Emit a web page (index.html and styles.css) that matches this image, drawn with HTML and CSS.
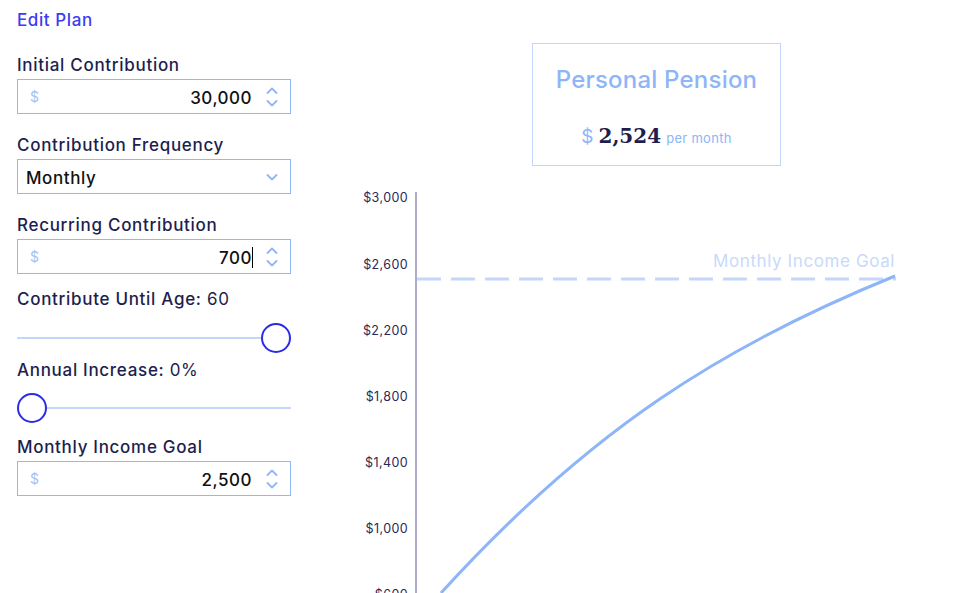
FILE: index.html
```html
<!DOCTYPE html>
<html>
<head>
<meta charset="utf-8">
<link rel="stylesheet" href="styles.css">
</head>
<body>
<div class="page">
  <aside class="form">
    <div class="title">Edit Plan</div>

    <div class="label">Initial Contribution</div>
    <div class="field">
      <span class="cur">$</span>
      <span class="val">30,000</span>
      <span class="stepper">
        <svg width="12" height="24" viewBox="0 0 12 24"><path d="M1.5 8 L6 3.5 L10.5 8" /><path d="M1.5 16 L6 20.5 L10.5 16" /></svg>
      </span>
    </div>

    <div class="label gap">Contribution Frequency</div>
    <div class="field select">
      <span class="sel">Monthly</span>
      <span class="stepper">
        <svg width="12" height="24" viewBox="0 0 12 24"><path d="M1.5 10 L6 14.5 L10.5 10" /></svg>
      </span>
    </div>

    <div class="label gap">Recurring Contribution</div>
    <div class="field">
      <span class="cur">$</span>
      <span class="val caret">700</span>
      <span class="stepper">
        <svg width="12" height="24" viewBox="0 0 12 24"><path d="M1.5 8 L6 3.5 L10.5 8" /><path d="M1.5 16 L6 20.5 L10.5 16" /></svg>
      </span>
    </div>

    <div class="label gap-s">Contribute Until Age: <span class="lv">60</span></div>
    <div class="slider s1">
      <div class="track"></div>
      <div class="thumb"></div>
    </div>

    <div class="label gap-xs">Annual Increase: <span class="lv">0%</span></div>
    <div class="slider s2">
      <div class="thumb"></div>
      <div class="track"></div>
    </div>

    <div class="label gap-s">Monthly Income Goal</div>
    <div class="field">
      <span class="cur">$</span>
      <span class="val">2,500</span>
      <span class="stepper">
        <svg width="12" height="24" viewBox="0 0 12 24"><path d="M1.5 8 L6 3.5 L10.5 8" /><path d="M1.5 16 L6 20.5 L10.5 16" /></svg>
      </span>
    </div>
  </aside>

  <main class="result">
    <div class="card">
      <div class="card-title">Personal Pension</div>
      <div class="amount"><span class="dollar">$</span><span class="num">2,524</span><span class="per">per month</span></div>
    </div>
    <svg class="chart" width="633" height="408" viewBox="0 0 633 408">
      <g class="ticks">
        <text x="68" y="12">$3,000</text>
        <text x="68" y="79">$2,600</text>
        <text x="68" y="145">$2,200</text>
        <text x="68" y="211">$1,800</text>
        <text x="68" y="277">$1,400</text>
        <text x="68" y="343">$1,000</text>
        <text x="68" y="409">$600</text>
      </g>
      <line class="axis" x1="76" y1="7" x2="76" y2="420" />
      <line class="goal" x1="77" y1="94" x2="556" y2="94" />
      <text class="goal-label" x="555" y="76">Monthly Income Goal</text>
      <path class="curve" d="M101 408 C251 243 385 160 555 91" />
    </svg>
  </main>
</div>
</body>
</html>
```

FILE: styles.css
```css
* { box-sizing: border-box; }
html, body { margin: 0; padding: 0; background: #fff; }
body {
  font-family: Inter, "Noto Sans", sans-serif;
  color: #1f1d4e;
  overflow: hidden;
}
.page {
  display: flex;
  padding: 9px 0 0 17px;
  height: 593px;
}
.form {
  width: 274px;
  flex: none;
  display: flex;
  flex-direction: column;
}
.title {
  font-size: 17px;
  line-height: 22px;
  font-weight: 500;
  color: #3c3cf0;
  margin-bottom: 23px;
  letter-spacing: 0.6px;
}
.label {
  font-size: 17px;
  line-height: 22px;
  font-weight: 500;
  color: #201e50;
  margin-bottom: 3px;
  letter-spacing: 0.7px;
}
.label.gap { margin-top: 20px; }
.label.gap-s { margin-top: 14px; margin-bottom: 0; }
.label.gap-xs { margin-top: 7px; margin-bottom: 0; }
.label.gap-s + .field { margin-top: 3px; }
.lv { font-weight: 400; }
.field {
  height: 35px;
  border: 1px solid #93b8f6;
  display: flex;
  align-items: center;
  padding: 0 12px 0 12px;
}
.cur {
  color: #a3c1f6;
  font-size: 14px;
  width: 20px;
}
.val {
  flex: 1;
  text-align: right;
  font-size: 17px;
  line-height: 22px;
  color: #111;
  font-weight: 500;
  padding-right: 14px;
  padding-top: 2px;
  letter-spacing: 0.5px;
}
.caret::after {
  content: "";
  display: inline-block;
  width: 1px;
  height: 21px;
  background: #000;
  vertical-align: -4px;
  margin-right: -1px;
}
.select { padding-left: 8px; }
.sel {
  flex: 1;
  font-size: 17px;
  line-height: 22px;
  padding-top: 3px;
  font-weight: 500;
  color: #111;
  letter-spacing: 0.6px;
}
.stepper { display: flex; align-items: center; }
.stepper svg path {
  fill: none;
  stroke: #8fb6f5;
  stroke-width: 1.8;
  stroke-linecap: round;
  stroke-linejoin: round;
}
.slider {
  height: 28px;
  display: flex;
  align-items: center;
}
.s1 { margin-top: 14px; }
.s2 { margin-top: 13px; }
.track {
  flex: 1;
  height: 2px;
  background: #c4d7fa;
}
.thumb {
  width: 30px;
  height: 30px;
  border-radius: 50%;
  border: 2px solid #2b2be6;
  background: #fff;
  flex: none;
}
.s1 .thumb { margin-right: 0; }

.result {
  flex: 1;
  margin-left: 49px;
  display: flex;
  flex-direction: column;
  align-items: center;
  padding-top: 34px;
}
.card {
  width: 249px;
  height: 124px;
  border: 1px solid #c4d7fa;
  display: flex;
  flex-direction: column;
  align-items: center;
  padding-top: 22px;
}
.card-title {
  font-size: 24px;
  line-height: 28px;
  font-weight: 500;
  color: #8db5f7;
  letter-spacing: 0.2px;
}
.amount {
  margin-top: 30px;
  display: flex;
  align-items: baseline;
}
.dollar {
  font-size: 19px;
  color: #8db5f7;
  margin-right: 5px;
}
.num {
  font-family: "DejaVu Serif", "Liberation Serif", serif;
  font-weight: bold;
  font-size: 20px;
  color: #1f1d4e;
  margin-right: 5px;
}
.per {
  font-size: 13px;
  color: #8db5f7;
  letter-spacing: 0.3px;
}
.chart {
  margin-top: 19px;
  align-self: stretch;
  display: block;
  overflow: visible;
}
.ticks text {
  font-family: Inter, "Noto Sans", sans-serif;
  font-size: 12.5px;
  letter-spacing: 0.4px;
  fill: #2a2858;
  text-anchor: end;
  dominant-baseline: central;
}
.axis { stroke: #aeadcf; stroke-width: 2; }
.goal { stroke: #c4d7fa; stroke-width: 3; stroke-dasharray: 24 10; }
.goal-label {
  font-family: Inter, "Noto Sans", sans-serif;
  font-size: 17px;
  letter-spacing: 0.6px;
  fill: #c7dafb;
  text-anchor: end;
  dominant-baseline: central;
}
.curve { fill: none; stroke: #8db5f7; stroke-width: 3; }
```
